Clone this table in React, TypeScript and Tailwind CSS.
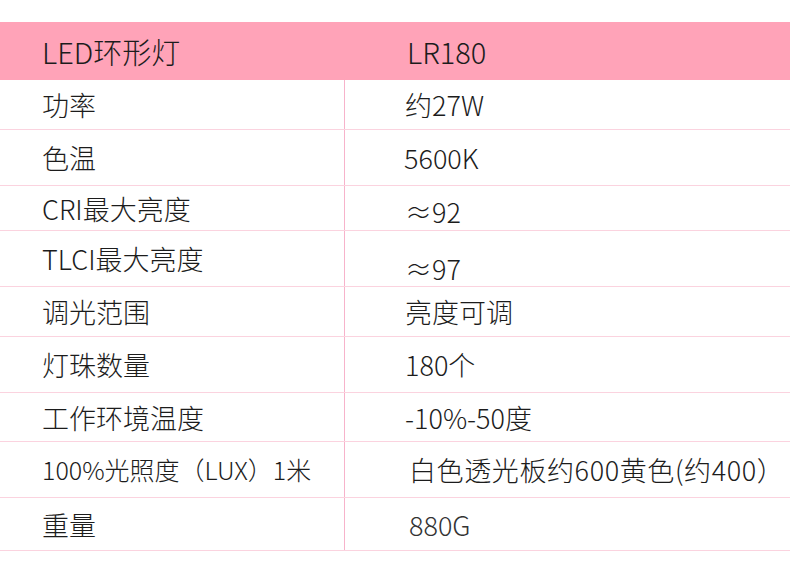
import React from 'react'

type Row = {
  label: string
  value: string
  h: string
  labelCls?: string
  valueCls?: string
}

// 参数表
const rows: Row[] = [
  { label: '功率', value: '约27W', h: 'h-[50px]' },
  { label: '色温', value: '5600K', h: 'h-[56px]', valueCls: 'pl-[59px]' },
  { label: 'CRI最大亮度', value: '≈92', h: 'h-[45px]', valueCls: 'pl-[60px] pt-[6px]' },
  { label: 'TLCI最大亮度', value: '≈97', h: 'h-[56px]', valueCls: 'pl-[60px] pt-[20px]' },
  { label: '调光范围', value: '亮度可调', h: 'h-[50px]' },
  { label: '灯珠数量', value: '180个', h: 'h-[56px]' },
  { label: '工作环境温度', value: '-10%-50度', h: 'h-[49px]' },
  { label: '100%光照度（LUX）1米', value: '白色透光板约600黄色(约400）', h: 'h-[56px]', labelCls: 'text-[25px]', valueCls: 'pl-[64px] tracking-[0.6px]' },
  { label: '重量', value: '880G', h: 'h-[53px]', valueCls: 'pl-[64px] text-[#333]' },
]

export default function App() {
  return (
    <div
      className="w-[790px] h-[576px] bg-white text-[#1c1c1c] font-light overflow-hidden"
      style={{ fontFamily: '"Noto Sans CJK SC", "Noto Sans", sans-serif' }}
    >
      <div className="h-[22px]" />

      <div className="grid grid-cols-[345px_1fr] h-[58px] bg-[#ffa3b8] text-[29px] leading-none">
        <div className="flex items-center pl-[42px]">LED环形灯</div>
        <div className="flex items-center pl-[62px]">LR180</div>
      </div>

      {rows.map((r) => (
        <div key={r.label} className={`grid grid-cols-[345px_1fr] border-b border-[#fbd3df] text-[27px] leading-none ${r.h}`}>
          <div className={`flex items-center pl-[42px] border-r border-[#f7b3cb] ${r.labelCls ?? ''}`}>
            {r.label}
          </div>
          <div className={`flex items-center ${r.valueCls ?? 'pl-[60px]'}`}>
            {r.value}
          </div>
        </div>
      ))}
    </div>
  )
}
